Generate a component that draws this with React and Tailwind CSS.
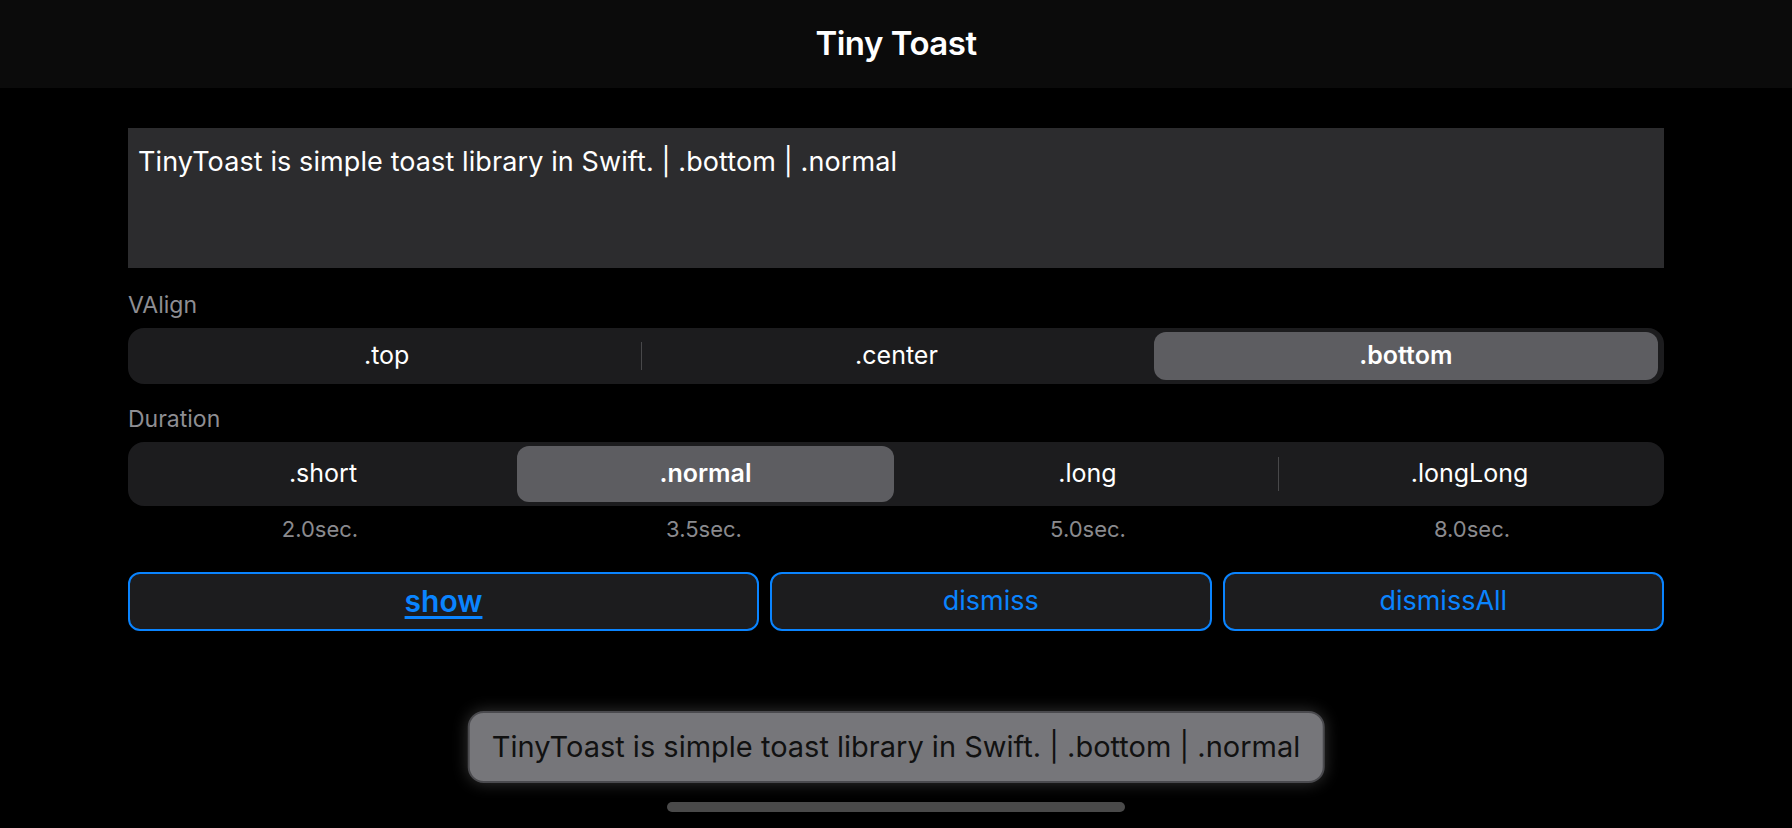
import React, { useState } from "react";

const FONT = { fontFamily: "Inter, 'Noto Sans', sans-serif" };

const Segmented = ({ items, selected, onSelect, height }) => {
  return (
    <div className={`flex bg-[#1c1c1e] rounded-[16px] p-[4px] ${height}`}>
      {items.map((item, i) => {
        const isSel = i === selected;
        // divider shows only between two unselected segments
        const showDivider =
          i > 0 && i !== selected && i - 1 !== selected;
        return (
          <div key={item} className="flex-1 flex items-center relative">
            {i > 0 && (
              <div
                className={`w-px h-[60%] ${showDivider ? "bg-[#48484a]" : "bg-transparent"}`}
              />
            )}
            <button
              onClick={() => onSelect(i)}
              className={`flex-1 h-full mx-[2px] rounded-[12px] text-[25px] text-white ${
                isSel ? "bg-[#5d5d61] font-semibold" : "font-normal"
              }`}
            >
              {item}
            </button>
          </div>
        );
      })}
    </div>
  );
};

export default function App() {
  const [valign, setValign] = useState(2);
  const [duration, setDuration] = useState(1);

  const valigns = [".top", ".center", ".bottom"];
  const durations = [".short", ".normal", ".long", ".longLong"];
  const secs = ["2.0sec.", "3.5sec.", "5.0sec.", "8.0sec."];

  const message = `TinyToast is simple toast library in Swift. | ${valigns[valign]} | ${durations[duration]}`;

  return (
    <div className="relative w-full h-[828px] bg-black overflow-hidden" style={FONT}>
      {/* Nav bar */}
      <header className="h-[88px] bg-[#0b0b0b] flex items-center justify-center">
        <h1 className="text-[33px] font-semibold text-white tracking-[-0.5px]">Tiny Toast</h1>
      </header>

      <div className="px-[128px] pt-[40px]">
        {/* Text view */}
        <div className="h-[140px] bg-[#2c2c2e] px-[10px] pt-[17px]">
          <p className="text-[27px] leading-[34px] text-white tracking-[0.1px]">{message}</p>
        </div>

        <div className="mt-[22px] text-[23px] leading-[30px] text-[#8e8e93]">VAlign</div>
        <div className="mt-[8px]">
          <Segmented items={valigns} selected={valign} onSelect={setValign} height="h-[56px]" />
        </div>

        <div className="mt-[20px] text-[23px] leading-[30px] text-[#8e8e93]">Duration</div>
        <div className="mt-[8px]">
          <Segmented items={durations} selected={duration} onSelect={setDuration} height="h-[64px]" />
        </div>

        <div className="mt-[10px] flex">
          {secs.map((s) => (
            <div key={s} className="flex-1 text-center text-[22px] leading-[26px] text-[#8a8a8e]">
              {s}
            </div>
          ))}
        </div>

        {/* Action buttons */}
        <div className="mt-[30px] flex gap-[11px]">
          <button className="w-[631px] h-[59px] rounded-[12px] border-2 border-[#0a84ff] bg-[#1c1c1e] text-[#0a84ff] text-[30px] font-semibold underline decoration-[3px] underline-offset-[4px]">
            show
          </button>
          <button className="flex-1 h-[59px] rounded-[12px] border-2 border-[#0a84ff] bg-[#1c1c1e] text-[#0a84ff] text-[27px]">
            dismiss
          </button>
          <button className="flex-1 h-[59px] rounded-[12px] border-2 border-[#0a84ff] bg-[#1c1c1e] text-[#0a84ff] text-[27px]">
            dismissAll
          </button>
        </div>
      </div>

      {/* Toast */}
      <div className="absolute left-1/2 -translate-x-1/2 top-[711px] h-[72px] px-[22px] flex items-center rounded-[16px] bg-[#76767a] border-2 border-[#4a4a4e] shadow-[0_0_16px_rgba(255,255,255,0.2)] whitespace-nowrap">
        <span className="text-[29px] text-[#111]">{message}</span>
      </div>

      {/* Home indicator */}
      <div className="absolute left-1/2 -translate-x-1/2 top-[802px] w-[458px] h-[10px] rounded-full bg-[#4a4a4a]" />
    </div>
  );
}
